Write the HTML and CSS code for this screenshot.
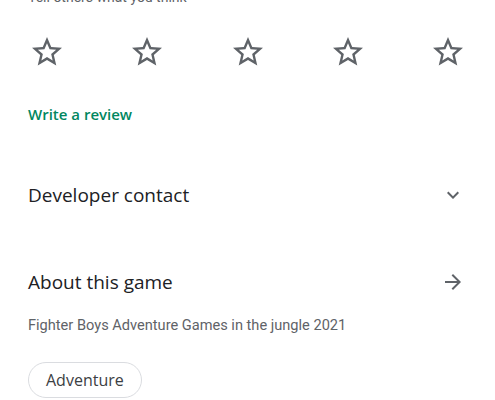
FILE: index.html
```html
<!DOCTYPE html>
<html lang="en">
<head>
    <meta charset="UTF-8">
    <meta name="viewport" content="width=device-width, initial-scale=1.0">
    <title>About this game</title>
    <link rel="stylesheet" href="styles.css">
</head>
<body>
    <div class="page">
        <p class="hint">Tell others what you think</p>

        <div class="stars">
            <button class="star" aria-label="1 star"><svg viewBox="0 0 24 24"><path d="M22 9.24l-7.19-.62L12 2 9.19 8.63 2 9.24l5.46 4.73L5.82 21 12 17.27 18.18 21l-1.63-7.03L22 9.24zM12 15.4l-3.76 2.27 1-4.28-3.32-2.88 4.38-.38L12 6.1l1.71 4.040 4.38.38-3.32 2.88 1 4.28L12 15.4z"/></svg></button>
            <button class="star" aria-label="2 stars"><svg viewBox="0 0 24 24"><path d="M22 9.24l-7.19-.62L12 2 9.19 8.63 2 9.24l5.46 4.73L5.82 21 12 17.27 18.18 21l-1.63-7.03L22 9.24zM12 15.4l-3.76 2.27 1-4.28-3.32-2.88 4.38-.38L12 6.1l1.71 4.04 4.38.38-3.32 2.88 1 4.28L12 15.4z"/></svg></button>
            <button class="star" aria-label="3 stars"><svg viewBox="0 0 24 24"><path d="M22 9.24l-7.19-.62L12 2 9.19 8.63 2 9.24l5.46 4.73L5.82 21 12 17.27 18.18 21l-1.63-7.03L22 9.24zM12 15.4l-3.76 2.27 1-4.28-3.32-2.88 4.38-.38L12 6.1l1.71 4.04 4.38.38-3.32 2.88 1 4.28L12 15.4z"/></svg></button>
            <button class="star" aria-label="4 stars"><svg viewBox="0 0 24 24"><path d="M22 9.24l-7.19-.62L12 2 9.19 8.63 2 9.24l5.46 4.73L5.82 21 12 17.27 18.18 21l-1.63-7.03L22 9.24zM12 15.4l-3.76 2.27 1-4.28-3.32-2.88 4.38-.38L12 6.1l1.71 4.04 4.38.38-3.32 2.88 1 4.28L12 15.4z"/></svg></button>
            <button class="star" aria-label="5 stars"><svg viewBox="0 0 24 24"><path d="M22 9.24l-7.19-.62L12 2 9.19 8.63 2 9.24l5.46 4.73L5.82 21 12 17.27 18.18 21l-1.63-7.03L22 9.24zM12 15.4l-3.76 2.27 1-4.28-3.32-2.88 4.38-.38L12 6.1l1.71 4.04 4.38.38-3.32 2.88 1 4.28L12 15.4z"/></svg></button>
        </div>

        <a class="write-review" href="#">Write a review</a>

        <div class="section-row contact-row">
            <h2>Developer contact</h2>
            <svg class="row-icon" viewBox="0 0 24 24"><path d="M7.41 8.59L12 13.17l4.59-4.58L18 10l-6 6-6-6 1.41-1.41z"/></svg>
        </div>

        <div class="section-row about-row">
            <h2>About this game</h2>
            <svg class="row-icon" viewBox="0 0 24 24"><path d="M12 4l-1.41 1.41L16.17 11H4v2h12.17l-5.58 5.59L12 20l8-8z"/></svg>
        </div>

        <p class="description">Fighter Boys Adventure Games in the jungle 2021</p>

        <div class="chips">
            <span class="chip">Adventure</span>
        </div>
    </div>
</body>
</html>
```

FILE: styles.css
```css
body {
    margin: 0;
    background-color: white;
    font-family: "Open Sans", "Liberation Sans", sans-serif;
    color: #202124;
    overflow: hidden;
}

.page {
    padding: 0 28px;
}

/* only the bottom of this line is visible, the rest is scrolled away */
.hint {
    margin: -13px 0 0;
    font-family: Roboto, "Liberation Sans", sans-serif;
    font-size: 14px;
    line-height: 20px;
    color: #5f6368;
}

.stars {
    display: flex;
    justify-content: space-between;
    margin-top: 27px;
}

.star {
    width: 38px;
    height: 36px;
    padding: 0;
    border: none;
    background: none;
    display: flex;
    justify-content: center;
}

.star svg {
    width: 36px;
    height: 36px;
    fill: #5f6368;
}

.write-review {
    display: block;
    margin-top: 34px;
    font-size: 15px;
    line-height: 20px;
    font-weight: 600;
    color: #01875f;
    text-decoration: none;
}

.section-row {
    display: flex;
    justify-content: space-between;
    align-items: center;
}

.section-row h2 {
    margin: 0;
    font-size: 19px;
    line-height: 24px;
    font-weight: 400;
}

.contact-row {
    margin-top: 59px;
}

.about-row {
    margin-top: 63px;
}

.row-icon {
    width: 24px;
    height: 24px;
    fill: #5f6368;
    margin-right: 2px;
}

.description {
    margin: 21px 0 0;
    font-family: Roboto, "Liberation Sans", sans-serif;
    font-size: 14.6px;
    line-height: 20px;
    color: #5f6368;
}

.chips {
    display: flex;
    margin-top: 27px;
}

.chip {
    display: inline-flex;
    align-items: center;
    height: 34px;
    padding: 0 17px;
    border: 1px solid #dadce0;
    border-radius: 18px;
    font-size: 16px;
    font-weight: 500;
    color: #3c4043;
}
```
